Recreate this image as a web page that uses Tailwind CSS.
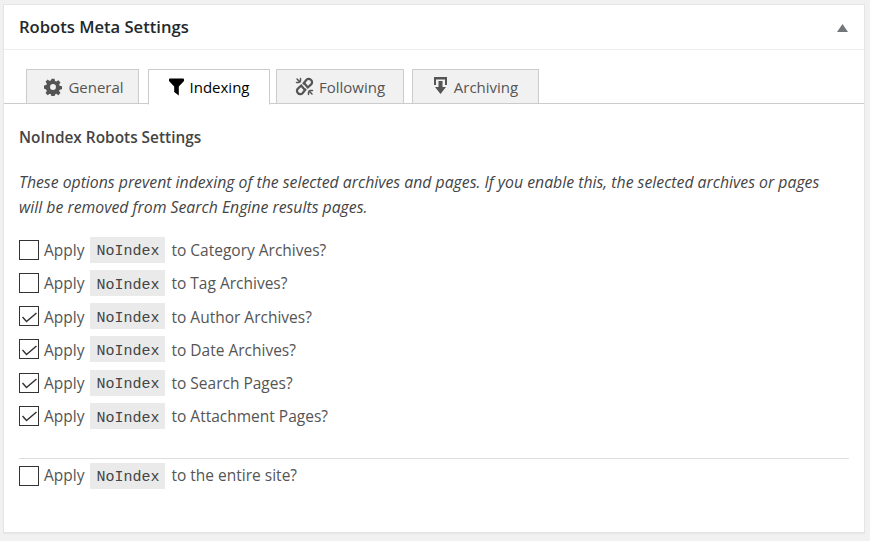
<!DOCTYPE html>
<html><head><meta charset="utf-8"><script src="https://cdn.jsdelivr.net/npm/@tailwindcss/browser@4"></script></head>
<body class="bg-[#f1f1f1] w-[870px] h-[541px] overflow-hidden font-['Open_Sans',sans-serif] text-[#444]">
<div class="ml-[3px] mt-[4px] w-[862px] h-[529px] bg-white border border-[#e5e5e5] shadow-[0_1px_1px_rgba(0,0,0,0.04)]">
  <div class="h-[45px] px-[15px] flex items-center justify-between border-b border-[#eeeeee]">
    <h2 class="text-[16.6px] font-semibold text-[#23282d] mt-[1px]">Robots Meta Settings</h2>
    <svg width="11" height="8" viewBox="0 0 11 8" class="mr-[1px] mt-[1px]"><path d="M5.5 0 L11 8 L0 8Z" fill="#72777c"/></svg>
  </div>
  <div class="mt-[19px] h-[35px] border-b border-[#ccc] flex pl-[22px] items-stretch text-[15px]">
    <div class="w-[113px] h-[35px] bg-[#f1f1f1] border border-[#ccc] flex items-center justify-center gap-[6px] pl-[3px] text-[#555]">
      <svg width="18" height="18" viewBox="0 0 20 20" fill="#555"><path fill-rule="evenodd" d="M8.3 0.8h3.4l.5 2.6 1.5.6 2.2-1.5 2.4 2.4-1.5 2.2.6 1.5 2.6.5v3.4l-2.6.5-.6 1.5 1.5 2.2-2.4 2.4-2.2-1.5-1.5.6-.5 2.6H8.3l-.5-2.6-1.5-.6-2.2 1.5-2.4-2.4 1.5-2.2-.6-1.5L0 11.7V8.3l2.6-.5.6-1.5-1.5-2.2 2.4-2.4 2.2 1.5 1.5-.6zM10 6.7a3.3 3.3 0 1 0 0 6.6 3.3 3.3 0 0 0 0-6.6z"/></svg>
      <span class="mt-[2px]">General</span>
    </div>
    <div class="ml-[9px] w-[122px] h-[36px] bg-white border border-[#ccc] border-b-white flex items-center justify-center gap-[6px] text-black">
      <svg width="15" height="18" viewBox="0 0 15 18" fill="#000"><path d="M0 1.5Q0 .5 1 .5H14Q15 .5 15 1.5V3L9.8 8.5V17.5L5.2 14V8.5L0 3Z"/></svg>
      <span class="mt-[1px]">Indexing</span>
    </div>
    <div class="ml-[6px] w-[128px] h-[35px] bg-[#f1f1f1] border border-[#ccc] flex items-center justify-center gap-[5px] text-[#555]">
      <svg width="19" height="19" viewBox="0 0 19 19" fill="none" stroke="#555" stroke-width="2.2" stroke-linecap="round"><path d="M8.5 6.5L11.5 2.8a3 3 0 0 1 4.6 0.2 3 3 0 0 1 0 4.4L12.8 10.5 9.5 6.5"/><path d="M10.5 12.5L7.5 16.2a3 3 0 0 1-4.6-0.2 3 3 0 0 1 0-4.4L6.2 8.5 9.5 12.5"/><path d="M2 2l3 3M1.5 5.5H4M5.5 1.5V4M17 17l-3-3M17.5 13.5H15M13.5 17.5V15" stroke-width="1.5"/></svg>
      <span class="mt-[2px]">Following</span>
    </div>
    <div class="ml-[8px] w-[127px] h-[35px] bg-[#f1f1f1] border border-[#ccc] flex items-center justify-center gap-[6px] text-[#555]">
      <svg width="15" height="18" viewBox="0 0 15 18" fill="#555" class="-mt-[1px]"><path d="M1 0H14V8H12V2.5H3V8H1Z"/><path d="M5.5 4H9.5V10H13L7.5 17L2 10H5.5Z"/></svg>
      <span class="mt-[2px]">Archiving</span>
    </div>
  </div>
  <div class="px-[15px]">
    <h3 class="mt-[24px] text-[15.4px] leading-[20px] font-semibold text-[#444]">NoIndex Robots Settings</h3>
    <p class="mt-[22px] text-[15.8px] leading-[25px] italic text-[#444] whitespace-nowrap">These options prevent indexing of the selected archives and pages. If you enable this, the selected archives or pages<br>will be removed from Search Engine results pages.</p>
    <div class="mt-[13px] flex flex-col">
      <label class="h-[33.25px] flex items-center text-[15.5px] text-[#555]"><span class="w-5 h-5 border border-[#333] shrink-0"></span><span class="ml-[5px] mt-[2px]">Apply</span><code class="ml-[6px] h-[26px] w-[75px] pt-[6px] bg-[#eaeaea] flex items-center justify-center font-['Liberation_Mono',monospace] text-[15px] text-[#444]">NoIndex</code><span class="ml-[6px] mt-[2px]">to Category Archives?</span></label>
      <label class="h-[33.25px] flex items-center text-[15.5px] text-[#555]"><span class="w-5 h-5 border border-[#333] shrink-0"></span><span class="ml-[5px] mt-[2px]">Apply</span><code class="ml-[6px] h-[26px] w-[75px] pt-[6px] bg-[#eaeaea] flex items-center justify-center font-['Liberation_Mono',monospace] text-[15px] text-[#444]">NoIndex</code><span class="ml-[6px] mt-[2px]">to Tag Archives?</span></label>
      <label class="h-[33.25px] flex items-center text-[15.5px] text-[#555]"><span class="w-5 h-5 border border-[#333] shrink-0 flex items-center justify-center"><svg width="15" height="11" viewBox="0 0 15 11" fill="none" stroke="#333" stroke-width="1.5" class="mt-[2px]"><path d="M0.5 5l4 4.5L14.5 1"/></svg></span><span class="ml-[5px] mt-[2px]">Apply</span><code class="ml-[6px] h-[26px] w-[75px] pt-[6px] bg-[#eaeaea] flex items-center justify-center font-['Liberation_Mono',monospace] text-[15px] text-[#444]">NoIndex</code><span class="ml-[6px] mt-[2px]">to Author Archives?</span></label>
      <label class="h-[33.25px] flex items-center text-[15.5px] text-[#555]"><span class="w-5 h-5 border border-[#333] shrink-0 flex items-center justify-center"><svg width="15" height="11" viewBox="0 0 15 11" fill="none" stroke="#333" stroke-width="1.5" class="mt-[2px]"><path d="M0.5 5l4 4.5L14.5 1"/></svg></span><span class="ml-[5px] mt-[2px]">Apply</span><code class="ml-[6px] h-[26px] w-[75px] pt-[6px] bg-[#eaeaea] flex items-center justify-center font-['Liberation_Mono',monospace] text-[15px] text-[#444]">NoIndex</code><span class="ml-[6px] mt-[2px]">to Date Archives?</span></label>
      <label class="h-[33.25px] flex items-center text-[15.5px] text-[#555]"><span class="w-5 h-5 border border-[#333] shrink-0 flex items-center justify-center"><svg width="15" height="11" viewBox="0 0 15 11" fill="none" stroke="#333" stroke-width="1.5" class="mt-[2px]"><path d="M0.5 5l4 4.5L14.5 1"/></svg></span><span class="ml-[5px] mt-[2px]">Apply</span><code class="ml-[6px] h-[26px] w-[75px] pt-[6px] bg-[#eaeaea] flex items-center justify-center font-['Liberation_Mono',monospace] text-[15px] text-[#444]">NoIndex</code><span class="ml-[6px] mt-[2px]">to Search Pages?</span></label>
      <label class="h-[33.25px] flex items-center text-[15.5px] text-[#555]"><span class="w-5 h-5 border border-[#333] shrink-0 flex items-center justify-center"><svg width="15" height="11" viewBox="0 0 15 11" fill="none" stroke="#333" stroke-width="1.5" class="mt-[2px]"><path d="M0.5 5l4 4.5L14.5 1"/></svg></span><span class="ml-[5px] mt-[2px]">Apply</span><code class="ml-[6px] h-[26px] w-[75px] pt-[6px] bg-[#eaeaea] flex items-center justify-center font-['Liberation_Mono',monospace] text-[15px] text-[#444]">NoIndex</code><span class="ml-[6px] mt-[2px]">to Attachment Pages?</span></label>
    </div>
    <div class="mt-[25px] border-t border-[#ddd] pt-[1px]">
      <label class="h-[33px] flex items-center text-[15.5px] text-[#555]"><span class="w-5 h-5 border border-[#333] shrink-0"></span><span class="ml-[5px]">Apply</span><code class="ml-[6px] h-[26px] w-[75px] pt-[4px] bg-[#eaeaea] flex items-center justify-center font-['Liberation_Mono',monospace] text-[15px] text-[#444]">NoIndex</code><span class="ml-[6px]">to the entire site?</span></label>
    </div>
  </div>
</div>
</body></html>
